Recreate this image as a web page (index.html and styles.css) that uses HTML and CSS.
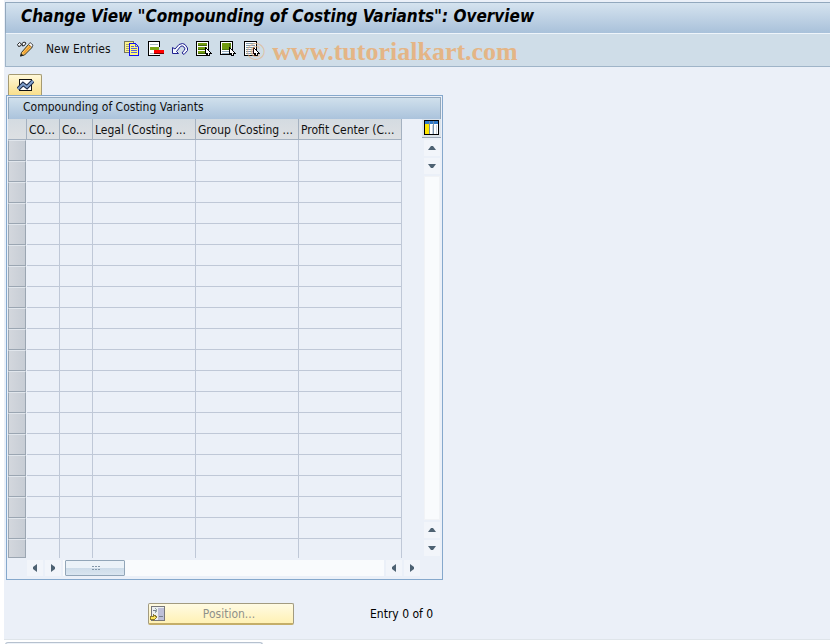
FILE: index.html
```html
<!DOCTYPE html>
<html lang="en">
<head>
<meta charset="utf-8">
<title>Change View "Compounding of Costing Variants": Overview</title>
<link rel="stylesheet" href="styles.css">
</head>
<body>
<main class="screen">
  <header class="titlebar"><h1>Change View "Compounding of Costing Variants": Overview</h1></header>
  <div class="toolbar">
    <button class="tool" aria-label="Display or change"><svg width="17" height="16" viewBox="0 0 17 16"><path d="M.5 3.500l2-2 2 1.500-1 2-2 .5zM5 2.500l2-1.500 2 1-1.500 2.500-2 .5z" fill="#f4f7fb" stroke="#222"/><path d="M4.500 11.500l7-8 3.500 3-7.500 7.500-4 1z" fill="#fbc75e" stroke="#38301e"/><path d="M11.500 3.500l1.500-2 3 2.500-1 2.500z" fill="#fff" stroke="#555"/><path d="M6.500 12.500l7-7.500" stroke="#f09a2c" stroke-width="1.500"/><path d="M3 15.500l1.500-3 2 2z" fill="#222"/></svg></button>
    <button class="tool tool-text">New Entries</button>
    <button class="tool" aria-label="Copy as"><svg width="16" height="16" viewBox="0 0 16 16" shape-rendering="crispEdges"><path d="M.5.500h9v11h-9z" fill="#fff58a" stroke="#77785a"/><path d="M2 3.500h6M2 5.500h6M2 7.500h6M2 9.500h6" stroke="#a5a273"/><path d="M5.500 2.500h6l3 3v9h-9z" fill="#fff77a" stroke="#1010f0"/><path d="M11.500 2.500v3h3M7 5.500h3M7 7.500h6M7 9.500h6M7 11.500h6" fill="none" stroke="#5560e0"/></svg></button>
    <button class="tool" aria-label="Delete"><svg width="16" height="16" viewBox="0 0 16 16" shape-rendering="crispEdges"><path d="M1 1h10v13H1z" fill="#fff"/><path d="M0 0h12v1H1v13h11v1H0zM11 0h1v6h-1z"/><path d="M2 3.500h8M2 12.500h8" stroke="#a9b9c5"/><path d="M2 6h9v3H2z" fill="#7aa516"/><path d="M6 9h10v4H6z" fill="#700"/><path d="M6 9h10v3H6z" fill="#f00"/></svg></button>
    <button class="tool" aria-label="Undo change"><svg width="16" height="16" viewBox="0 0 16 16"><path d="M.5 6.500v6h6l-2-2 4-5q1.500-1.500 3.500.5t0 3.500l-2 2.500 2 1.500 3.500-4V7l-2.500-3.500-2.500-1-3.500 1-4 4.500z" fill="#f4f8fd" stroke="#202090"/></svg></button>
    <button class="tool" aria-label="Select all"><svg width="16" height="16" viewBox="0 0 16 16" shape-rendering="crispEdges"><path d="M.5.500h12v14h-12z" fill="#fff" stroke="#000"/><path d="M2 2h9v3H2zM2 6h9v3H2zM2 10h9v3H2z" fill="#719b10"/><path d="M2 4.500h9M2 8.500h9M2 12.500h9" stroke="#41630b"/><path d="M9 6h1v1h1v1h1v1h1v1h1v1h1v1h1v1h-2v2h-3v-1h-1v-1H9z"/><path d="M10 8h1v1h1v1h1v1h1v1h-1v2h-1v-2h-2z" fill="#fff"/></svg></button>
    <button class="tool" aria-label="Select block"><svg width="16" height="16" viewBox="0 0 16 16" shape-rendering="crispEdges"><path d="M.5.500h12v13h-12z" fill="#fff" stroke="#000"/><path d="M2 2h9v7H2z" fill="#527b0c"/><path d="M2 2h7v6H2z" fill="#719b10"/><path d="M2 10.500h7M2 12.500h7" stroke="#91aabd"/><path d="M9 6h1v1h1v1h1v1h1v1h1v1h1v1h1v1h-2v2h-3v-1h-1v-1H9z"/><path d="M10 8h1v1h1v1h1v1h1v1h-1v2h-1v-2h-2z" fill="#fff"/></svg></button>
    <button class="tool" aria-label="Deselect all"><svg width="16" height="16" viewBox="0 0 16 16" shape-rendering="crispEdges"><path d="M.5.500h12v14h-12z" fill="#fff" stroke="#000"/><path d="M2 2.500h9M2 4.500h9M2 6.500h9M2 8.500h9M2 10.500h9M2 12.500h9" stroke="#8199ac"/><path d="M9 6h1v1h1v1h1v1h1v1h1v1h1v1h1v1h-2v2h-3v-1h-1v-1H9z"/><path d="M10 8h1v1h1v1h1v1h1v1h-1v2h-1v-2h-2z" fill="#fff"/></svg></button>
    <span class="watermark"><span class="mark">©</span> www.tutorialkart.com</span>
  </div>

  <section class="content">
    <button class="graph" aria-label="Display graphic"><svg width="17" height="12" viewBox="0 0 17 12"><path d="M2.500.500h12v11h-12z" fill="#fff" stroke="#111" shape-rendering="crispEdges"/><path d="M4 4l4 3 6-4" fill="none" stroke="#ccc"/><path d="M1 10l5-5 4 3 6-6" fill="none" stroke="#1d2a48" stroke-width="4"/><path d="M1 10l5-5 4 3 6-6" fill="none" stroke="#7e9fcd" stroke-width="2"/></svg></button>
    <div class="panel">
      <h2>Compounding of Costing Variants</h2>
      <div class="panel-body">
        <table>
          <colgroup><col class="c-select"><col class="c-short"><col class="c-short"><col class="c-long"><col class="c-long"><col class="c-long"></colgroup>
          <thead><tr><th aria-label="Row selection"></th><th>CO...</th><th>Co...</th><th>Legal (Costing ...</th><th>Group (Costing ...</th><th>Profit Center (C...</th></tr></thead>
          <tbody>
            <tr><td><button aria-label="Select row 1"></button></td><td></td><td></td><td></td><td></td><td></td></tr>
            <tr><td><button aria-label="Select row 2"></button></td><td></td><td></td><td></td><td></td><td></td></tr>
            <tr><td><button aria-label="Select row 3"></button></td><td></td><td></td><td></td><td></td><td></td></tr>
            <tr><td><button aria-label="Select row 4"></button></td><td></td><td></td><td></td><td></td><td></td></tr>
            <tr><td><button aria-label="Select row 5"></button></td><td></td><td></td><td></td><td></td><td></td></tr>
            <tr><td><button aria-label="Select row 6"></button></td><td></td><td></td><td></td><td></td><td></td></tr>
            <tr><td><button aria-label="Select row 7"></button></td><td></td><td></td><td></td><td></td><td></td></tr>
            <tr><td><button aria-label="Select row 8"></button></td><td></td><td></td><td></td><td></td><td></td></tr>
            <tr><td><button aria-label="Select row 9"></button></td><td></td><td></td><td></td><td></td><td></td></tr>
            <tr><td><button aria-label="Select row 10"></button></td><td></td><td></td><td></td><td></td><td></td></tr>
            <tr><td><button aria-label="Select row 11"></button></td><td></td><td></td><td></td><td></td><td></td></tr>
            <tr><td><button aria-label="Select row 12"></button></td><td></td><td></td><td></td><td></td><td></td></tr>
            <tr><td><button aria-label="Select row 13"></button></td><td></td><td></td><td></td><td></td><td></td></tr>
            <tr><td><button aria-label="Select row 14"></button></td><td></td><td></td><td></td><td></td><td></td></tr>
            <tr><td><button aria-label="Select row 15"></button></td><td></td><td></td><td></td><td></td><td></td></tr>
            <tr><td><button aria-label="Select row 16"></button></td><td></td><td></td><td></td><td></td><td></td></tr>
            <tr><td><button aria-label="Select row 17"></button></td><td></td><td></td><td></td><td></td><td></td></tr>
            <tr><td><button aria-label="Select row 18"></button></td><td></td><td></td><td></td><td></td><td></td></tr>
            <tr><td><button aria-label="Select row 19"></button></td><td></td><td></td><td></td><td></td><td></td></tr>
            <tr><td><button aria-label="Select row 20"></button></td><td></td><td></td><td></td><td></td><td></td></tr>
          </tbody>
        </table>
        <div class="vscroll">
          <button class="config" aria-label="Configuration"><svg width="15" height="15" viewBox="0 0 15 15" shape-rendering="crispEdges"><path d="M.5.500h14v14H.5z" fill="#fff" stroke="#000"/><path d="M1 1h13v3H1z" fill="#2f78c8"/><path d="M1 4h4v10H1z" fill="#ffe600"/><path d="M5.500 1v13M9.500 1v13" stroke="#7890a8"/><path d="M8 5h1v9H8zM12 5h1v9h-1z" fill="#ccd5df"/></svg></button>
          <button class="arrow" aria-label="First row"><svg width="10" height="6" viewBox="0 0 10 6"><path d="M1 5l3-4h2l3 4z"/></svg></button>
          <button class="arrow" aria-label="Row up"><svg width="10" height="6" viewBox="0 0 10 6"><path d="M1 1h8L6 5H4z"/></svg></button>
          <div class="track"></div>
          <button class="arrow" aria-label="Row down"><svg width="10" height="6" viewBox="0 0 10 6"><path d="M1 5l3-4h2l3 4z"/></svg></button>
          <button class="arrow" aria-label="Last row"><svg width="10" height="6" viewBox="0 0 10 6"><path d="M1 1h8L6 5H4z"/></svg></button>
        </div>
      </div>
      <div class="hscroll">
        <button class="arrow" aria-label="First column"><svg width="6" height="10" viewBox="0 0 6 10"><path d="M5 1v8L1 6V4z"/></svg></button>
        <button class="arrow" aria-label="Column left"><svg width="6" height="10" viewBox="0 0 6 10"><path d="M1 1v8l4-3V4z"/></svg></button>
        <div class="track"><button class="thumb" aria-label="Scroll columns"><svg width="9" height="6" viewBox="0 0 9 6" shape-rendering="crispEdges"><path d="M1 1h2v1H1zM4 1h2v1H4zM7 1h2v1H7zM1 4h2v1H1zM4 4h2v1H4zM7 4h2v1H7z" fill="#8296a8"/></svg></button></div>
        <button class="arrow" aria-label="Column right"><svg width="6" height="10" viewBox="0 0 6 10"><path d="M5 1v8L1 6V4z"/></svg></button>
        <button class="arrow" aria-label="Last column"><svg width="6" height="10" viewBox="0 0 6 10"><path d="M1 1v8l4-3V4z"/></svg></button>
      </div>
    </div>
    <div class="actions">
      <button class="position" disabled><svg width="16" height="16" viewBox="0 0 16 16" shape-rendering="crispEdges"><path d="M1.500.500h13v14h-13z" fill="#edf0f1" stroke="#77777a"/><path d="M8 2h6v12H8z" fill="#bdbfd8"/><path d="M3 4.500h4M9 10.500h4" stroke="#76808b"/><path d="M5 2l2 2-2 3" fill="none" stroke="#93a6a3"/><path d="M0 10h3V8l4 3-4 4v-2H0z" fill="#ffe65c" stroke="#8b7c32"/></svg><span>Position...</span></button>
      <span class="count">Entry 0 of 0</span>
    </div>
  </section>
</main>
<footer class="status"><div class="message"></div><div class="indicator"></div></footer>
</body>
</html>
```

FILE: styles.css
```css
* { box-sizing: border-box; }
body {
  margin: 0;
  min-height: 100vh;
  display: flex;
  flex-direction: column;
  background: #fff;
  color: #111;
  font: 12px/16px "DejaVu Sans Condensed", Tahoma, sans-serif;
}
button { margin: 0; padding: 0; border: 0; background: none; color: inherit; font: inherit; }
svg { display: block; }
h1, h2 { margin: 0; }

.screen { flex: 1; margin-left: 4px; background: #ebf0f8; border-bottom: 1px solid #dfe5ea; }
.titlebar {
  height: 31px;
  margin: 2px 0 0 1px;
  padding: 0 15px;
  border-top: 1px solid #92a8bd;
  border-left: 1px solid #92a8bd;
  background: linear-gradient(#d5e3ef, #a9c1da);
}
h1 { font-size: 17px; line-height: 27px; font-weight: bold; font-style: italic; color: #000; white-space: nowrap; }
.toolbar {
  position: relative;
  display: flex;
  align-items: center;
  gap: 8px;
  height: 34px;
  margin-left: 1px;
  padding: 0 11px 1px;
  border: solid #9fb4c8;
  border-width: 0 0 1px 1px;
  background: #cfdde8;
  box-shadow: inset 0 1px #eef4fa;
}
.tool { flex: none; }
.tool-text { margin: 0 5px 0 4px; white-space: nowrap; }
.watermark {
  position: absolute;
  left: 240px;
  top: 5px;
  color: #e4b586;
  font: bold 26px/28px "Liberation Serif", serif;
  white-space: nowrap;
  pointer-events: none;
}
.mark { font-weight: normal; opacity: 0.7; }

.content { display: flex; flex-direction: column; align-items: flex-start; padding: 7px 2px 14px; }
.graph {
  display: grid;
  place-items: center;
  width: 34px;
  height: 21px;
  margin-left: 2px;
  border: 1px solid #a59a72;
  border-bottom: 0;
  border-radius: 2px 2px 0 0;
  background: linear-gradient(#fff8d8, #f9df8c);
}
.panel { padding: 1px; border: 1px solid #85a8cc; }
h2 {
  padding: 0 14px 3px;
  border: 1px solid #92a8bd;
  border-width: 1px 1px 0;
  background: linear-gradient(#d0e0ec, #abc3dc);
  font-size: 12px;
  line-height: 18px;
  font-weight: normal;
}
.panel-body { display: flex; gap: 20px; }
table { table-layout: fixed; width: 394px; border-collapse: separate; border-spacing: 0; }
.c-select { width: 19px; }
.c-short { width: 33px; }
.c-long { width: 103px; }
th, td { height: 21px; padding: 0; border: solid #bfc8d7; border-width: 0 1px 1px 0; }
th {
  padding: 2px 2px 0;
  border-color: #a4b1c0;
  background: linear-gradient(#d4dbe1, #dde0e3);
  font-weight: normal;
  text-align: left;
  white-space: nowrap;
  overflow: hidden;
}
td:first-child { border: 0; }
td button {
  display: block;
  width: 18px;
  height: 21px;
  border: 1px solid #9ba6b2;
  border-top-color: #e1e6ec;
  background: linear-gradient(90deg, #d3d7dd, #c7cdd5);
}
tr:last-child td { height: 19px; border-bottom: 0; }
tr:last-child button { height: 19px; }

.vscroll { display: flex; flex-direction: column; align-items: center; gap: 2px; width: 19px; padding-bottom: 2px; }
.config { width: 19px; height: 19px; padding: 1px 2px 2px; border-bottom: 1px solid #9aa7b5; background: #dce3ea; }
.arrow { display: grid; place-items: center; flex: none; width: 16px; height: 16px; background: #f2f5fa; }
.arrow path { fill: #4e6272; }
.track { flex: 1; background: #f9fbfd; }
.vscroll .track { width: 16px; border: 1px solid #f1f3f6; }
.hscroll { display: flex; gap: 2px; padding: 2px 21px 2px 19px; }
.hscroll .track { display: flex; }
.thumb {
  display: grid;
  place-items: center;
  width: 60px;
  height: 16px;
  margin-left: 2px;
  border: 1px solid #92a6b8;
  border-radius: 1px;
  background: linear-gradient(#ebf2f8 50%, #cddce9 50%, #d9e5f0);
}

.actions { display: flex; align-items: center; gap: 76px; padding: 23px 0 0 142px; }
.position {
  display: flex;
  align-items: center;
  width: 146px;
  height: 22px;
  padding: 0 1px;
  border: 1px solid #a29b80;
  border-bottom: 2px solid #c4ae69;
  border-radius: 2px;
  background: linear-gradient(#fffbe3, #fff1b5);
  color: #8f9189;
}
.position span { flex: 1; text-align: center; }
.count { color: #000; }

.status { display: flex; align-items: flex-end; gap: 386px; height: 5px; padding: 2px 0 0 5px; }
.message { flex: none; width: 258px; height: 3px; border: solid #b6c1cf; border-width: 1px 1px 0; border-radius: 3px 3px 0 0; background: #edf2f8; }
.indicator { width: 39px; height: 1px; background: #c4edf2; }
```
